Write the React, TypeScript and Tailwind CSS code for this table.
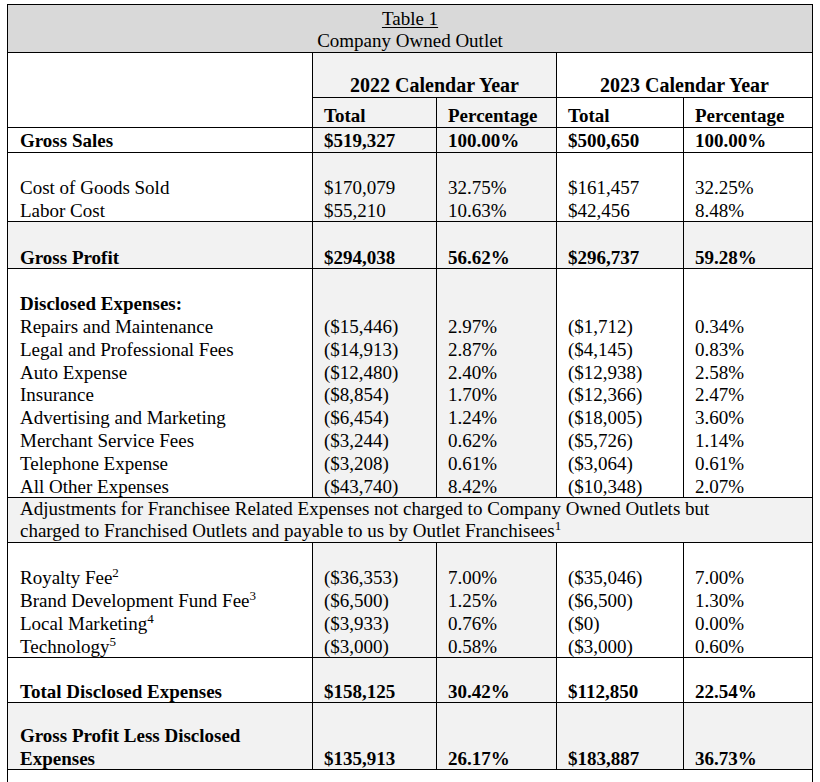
const shade = "bg-[#f2f2f2]";
const cell = "border border-black align-bottom px-[11px] p-0";

type Block = {
  label: React.ReactNode[];
  values: React.ReactNode[][];
  bold?: boolean;
  fill?: boolean;
  h: string;
};

function Note({ n }: { n: string }) {
  return <sup className="top-[-7px] text-[13px]">{n}</sup>;
}

const blocks: Block[] = [
  {
    label: ["", "Cost of Goods Sold", "Labor Cost"],
    values: [
      ["$170,079", "$55,210"],
      ["32.75%", "10.63%"],
      ["$161,457", "$42,456"],
      ["32.25%", "8.48%"],
    ],
    h: "h-[68px]",
  },
  {
    label: ["Gross Profit"],
    values: [["$294,038"], ["56.62%"], ["$296,737"], ["59.28%"]],
    bold: true,
    fill: true,
    h: "h-[47px]",
  },
  {
    label: [
      "",
      <b key="d">Disclosed Expenses:</b>,
      "Repairs and Maintenance",
      "Legal and Professional Fees",
      "Auto Expense",
      "Insurance",
      "Advertising and Marketing",
      "Merchant Service Fees",
      "Telephone Expense",
      "All Other Expenses",
    ],
    values: [
      ["($15,446)", "($14,913)", "($12,480)", "($8,854)", "($6,454)", "($3,244)", "($3,208)", "($43,740)"],
      ["2.97%", "2.87%", "2.40%", "1.70%", "1.24%", "0.62%", "0.61%", "8.42%"],
      ["($1,712)", "($4,145)", "($12,938)", "($12,366)", "($18,005)", "($5,726)", "($3,064)", "($10,348)"],
      ["0.34%", "0.83%", "2.58%", "2.47%", "3.60%", "1.14%", "0.61%", "2.07%"],
    ],
    h: "h-[228px]",
  },
];

const royalty: Block = {
  label: [
    "",
    <span key="r">Royalty Fee<Note n="2" /></span>,
    <span key="b">Brand Development Fund Fee<Note n="3" /></span>,
    <span key="l">Local Marketing<Note n="4" /></span>,
    <span key="t">Technology<Note n="5" /></span>,
  ],
  values: [
    ["($36,353)", "($6,500)", "($3,933)", "($3,000)"],
    ["7.00%", "1.25%", "0.76%", "0.58%"],
    ["($35,046)", "($6,500)", "($0)", "($3,000)"],
    ["7.00%", "1.30%", "0.00%", "0.60%"],
  ],
  h: "h-[115px]",
};

const totals: Block[] = [
  {
    label: ["Total Disclosed Expenses"],
    values: [["$158,125"], ["30.42%"], ["$112,850"], ["22.54%"]],
    bold: true,
    h: "h-[45px]",
  },
  {
    label: ["Gross Profit Less Disclosed", "Expenses"],
    values: [["$135,913"], ["26.17%"], ["$183,887"], ["36.73%"]],
    bold: true,
    fill: true,
    h: "h-[67px]",
  },
];

function Lines({ items }: { items: React.ReactNode[] }) {
  return (
    <>
      {items.map((t, i) => (
        <div key={i} className="h-[22.8px] whitespace-nowrap">
          {t}
        </div>
      ))}
    </>
  );
}

function Row({ block }: { block: Block }) {
  const weight = block.bold ? "font-bold" : "";
  return (
    <tr className={`${block.h} ${block.fill ? shade : ""}`}>
      <td className={`${cell} pl-[12px] ${weight}`}>
        <Lines items={block.label} />
      </td>
      {block.values.map((v, i) => (
        <td key={i} className={`${cell} ${weight} ${i < 2 ? shade : ""}`}>
          <Lines items={v} />
        </td>
      ))}
    </tr>
  );
}

export default function App() {
  return (
    <div className="min-h-screen bg-white pl-[7px] pt-[4px] font-['Liberation_Serif','Times_New_Roman',serif] text-[19px] leading-[23px] text-black">
      <table className="w-[805px] table-fixed border-collapse">
        <colgroup>
          <col className="w-[305px]" />
          <col className="w-[124px]" />
          <col className="w-[120px]" />
          <col className="w-[127px]" />
          <col className="w-[129px]" />
        </colgroup>
        <tbody>
          <tr className="h-[47px]">
            <td colSpan={5} className="border border-black bg-[#d9d9d9] p-0 pt-[3px] text-center align-top leading-[22px]">
              <div className="underline decoration-1 underline-offset-2">Table 1</div>
              <div>Company Owned Outlet</div>
            </td>
          </tr>
          <tr className="h-[45px]">
            <td rowSpan={2} className={cell}></td>
            <td colSpan={2} className={`${cell} ${shade} text-center text-[20px] font-bold`}>
              2022 Calendar Year
            </td>
            <td colSpan={2} className={`${cell} text-center text-[20px] font-bold`}>
              2023 Calendar Year
            </td>
          </tr>
          <tr className="h-[30px] font-bold">
            <td className={`${cell} ${shade}`}>Total</td>
            <td className={`${cell} ${shade}`}>Percentage</td>
            <td className={cell}>Total</td>
            <td className={cell}>Percentage</td>
          </tr>
          <tr className="h-[25px] font-bold">
            <td className={`${cell} pl-[12px]`}>Gross Sales</td>
            <td className={`${cell} ${shade}`}>$519,327</td>
            <td className={`${cell} ${shade}`}>100.00%</td>
            <td className={cell}>$500,650</td>
            <td className={cell}>100.00%</td>
          </tr>
          {blocks.map((b, i) => (
            <Row key={i} block={b} />
          ))}
          <tr className={`h-[45px] ${shade}`}>
            <td colSpan={5} className="border border-black p-0 pl-[12px] align-top leading-[22px]">
              Adjustments for Franchisee Related Expenses not charged to Company Owned Outlets but
              <br />
              charged to Franchised Outlets and payable to us by Outlet Franchisees
              <Note n="1" />
            </td>
          </tr>
          <Row block={royalty} />
          {totals.map((b, i) => (
            <Row key={i} block={b} />
          ))}
          <tr className="h-[20px]">
            <td colSpan={5} className="border-x border-black p-0"></td>
          </tr>
        </tbody>
      </table>
    </div>
  );
}
